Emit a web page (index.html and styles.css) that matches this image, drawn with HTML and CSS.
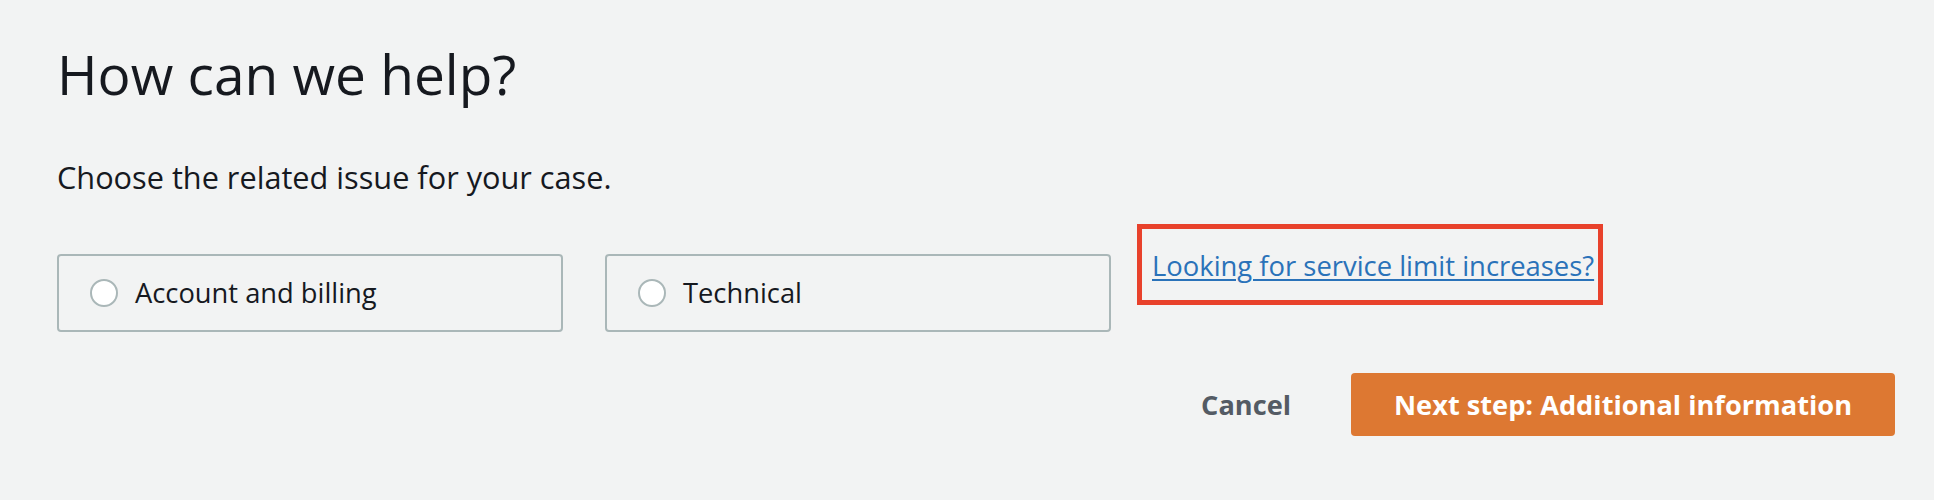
FILE: index.html
```html
<!DOCTYPE html>
<html lang="en">
<head>
<meta charset="utf-8">
<title>How can we help?</title>
<link rel="stylesheet" href="styles.css">
</head>
<body>
<main class="page">
  <h1 class="title">How can we help?</h1>
  <p class="subtitle">Choose the related issue for your case.</p>
  <div class="choices">
    <label class="choice">
      <span class="radio"></span>
      <span class="choice-label">Account and billing</span>
    </label>
    <label class="choice">
      <span class="radio"></span>
      <span class="choice-label">Technical</span>
    </label>
    <div class="highlight">
      <a class="limit-link" href="#">Looking for service limit increases?</a>
    </div>
  </div>
  <div class="actions">
    <button class="btn-cancel" type="button">Cancel</button>
    <button class="btn-primary" type="button">Next step: Additional information</button>
  </div>
</main>
</body>
</html>
```
FILE: styles.css
```css
* { box-sizing: border-box; }
html, body {
  margin: 0;
  background: #f2f3f3;
}
body {
  font-family: "Open Sans", "Liberation Sans", sans-serif;
  color: #16191f;
}
.page {
  padding: 42px 39px 0 57px;
  width: 1934px;
}
.title {
  margin: 0;
  font-size: 55px;
  line-height: 64px;
  font-weight: 400;
}
.subtitle {
  margin: 51px 0 0;
  font-size: 30.7px;
  line-height: 40px;
}
.choices {
  margin-top: 27px;
  display: flex;
  align-items: flex-start;
}
.choice {
  margin-top: 30px;
  width: 506px;
  height: 78px;
  border: 2px solid #aab7b8;
  border-radius: 4px;
  display: flex;
  align-items: center;
  padding-left: 31px;
  margin-right: 42px;
}
.choice + .choice { margin-right: 26px; }
.radio {
  width: 28px;
  height: 28px;
  border: 2px solid #aab7b8;
  border-radius: 50%;
  background: #fff;
  flex: none;
}
.choice-label {
  margin-left: 17px;
  font-size: 27.3px;
  line-height: 40px;
}
.highlight {
  border: 5px solid #e8412b;
  height: 81px;
  width: 466px;
  padding: 17px 10px 0;
}
.limit-link {
  font-size: 27.4px;
  line-height: 40px;
  color: #2a72b9;
  text-decoration: underline;
  text-underline-offset: 3px;
  text-decoration-thickness: 2px;
  white-space: nowrap;
}
.actions {
  margin-top: 41px;
  display: flex;
  justify-content: flex-end;
  align-items: center;
}
.btn-cancel, .btn-primary {
  font-family: inherit;
  font-weight: 700;
  font-size: 27.2px;
  border: none;
  cursor: pointer;
}
.btn-cancel {
  background: transparent;
  color: #545b64;
  padding: 0;
  margin-right: 60px;
}
.btn-primary {
  height: 63px;
  padding: 0 43px;
  background: #dd7832;
  color: #fff;
  border-radius: 4px;
}
```
